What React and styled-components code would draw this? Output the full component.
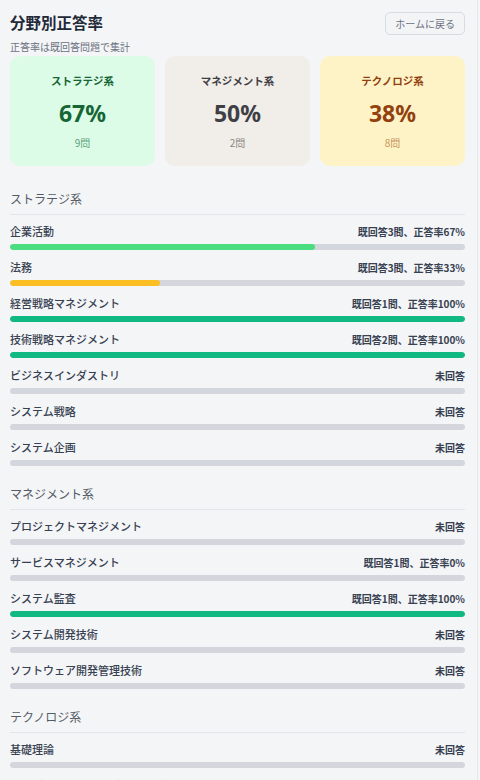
import React from "react";
import styled, { createGlobalStyle } from "styled-components";

const GlobalStyle = createGlobalStyle`
    html, body {
        margin: 0;
        padding: 0;
        background: #f4f5f7;
    }
    body {
        font-family: "Noto Sans CJK JP", "Noto Sans", sans-serif;
        color: #1f2937;
        overflow: hidden;
    }
`

const Page = styled.div`
    width: 478px;
    height: 780px;
    box-sizing: border-box;
    padding: 10px 12px 0 10px;
    border-right: 1px solid #e4e6ea;
    overflow: hidden;
`

const Header = styled.div`
    display: flex;
    justify-content: space-between;
    align-items: center;
`

const Title = styled.h1`
    margin: 0;
    font-size: 15.5px;
    font-weight: 700;
    color: #1f2937;
    line-height: 25px;
`

const HomeButton = styled.button`
    font-family: inherit;
    font-size: 10px;
    color: #6b7280;
    background: #f3f4f6;
    border: 1px solid #d8dbe0;
    border-radius: 5px;
    padding: 0 9px;
    height: 23px;
    margin-top: 1px;
`

const Sub = styled.div`
    font-size: 10px;
    color: #6b7280;
    margin-top: 5px;
    line-height: 14px;
`

const Cards = styled.div`
    display: grid;
    grid-template-columns: repeat(3, 1fr);
    gap: 10px;
    margin-top: 2px;
`

const Card = styled.div`
    background: ${p => p.$bg};
    border-radius: 10px;
    height: 110px;
    display: flex;
    flex-direction: column;
    align-items: center;
    padding-top: 17px;
    box-sizing: border-box;
`

const CardTitle = styled.div`
    font-size: 10.5px;
    font-weight: 700;
    color: ${p => p.$color};
    line-height: 16px;
`

const CardPct = styled.div`
    font-family: "Noto Sans", sans-serif;
    font-size: 23px;
    font-weight: 700;
    color: ${p => p.$color};
    line-height: 28px;
    margin-top: 10px;
`

const CardCount = styled.div`
    font-size: 10px;
    color: ${p => p.$color};
    line-height: 14px;
    margin-top: 9px;
`

const Section = styled.section`
    margin-top: 24px;
    & + & {
        margin-top: 19px;
    }
`

const SectionTitle = styled.div`
    font-size: 12px;
    color: #555b66;
    line-height: 18px;
    padding-bottom: 6px;
    border-bottom: 1px solid #e3e5e9;
    margin-bottom: 9px;
`

const Item = styled.div`
    margin-bottom: 10px;
`

const ItemHead = styled.div`
    display: flex;
    justify-content: space-between;
    align-items: center;
    line-height: 15px;
`

const Label = styled.span`
    font-size: 11px;
    font-weight: 500;
    color: #374151;
`

const Stat = styled.span`
    font-size: 10px;
    font-weight: 700;
    color: #374151;
`

const Track = styled.div`
    height: 6px;
    border-radius: 3px;
    background: #d3d6dc;
    margin-top: 5px;
    overflow: hidden;
`

const Fill = styled.div`
    height: 100%;
    border-radius: 3px;
    background: ${p => p.$color};
`

const summary = [
    { name: "ストラテジ系", pct: "67%", count: "9問", bg: "#dcfce7", fg: "#166534", sub: "#5fa37a" },
    { name: "マネジメント系", pct: "50%", count: "2問", bg: "#f1ede8", fg: "#3f3f46", sub: "#8a8680" },
    { name: "テクノロジ系", pct: "38%", count: "8問", bg: "#fef3c7", fg: "#92400e", sub: "#c7935a" },
];

const sections = [
    {
        name: "ストラテジ系",
        items: [
            { name: "企業活動", n: 3, rate: 67 },
            { name: "法務", n: 3, rate: 33 },
            { name: "経営戦略マネジメント", n: 1, rate: 100 },
            { name: "技術戦略マネジメント", n: 2, rate: 100 },
            { name: "ビジネスインダストリ" },
            { name: "システム戦略" },
            { name: "システム企画" },
        ],
    },
    {
        name: "マネジメント系",
        items: [
            { name: "プロジェクトマネジメント" },
            { name: "サービスマネジメント", n: 1, rate: 0 },
            { name: "システム監査", n: 1, rate: 100 },
            { name: "システム開発技術" },
            { name: "ソフトウェア開発管理技術" },
        ],
    },
    {
        name: "テクノロジ系",
        items: [
            { name: "基礎理論" },
            { name: "アルゴリズムとプログラミング" },
        ],
    },
];

const barColor = (rate) => {
    if (rate >= 80) return "#10b981";
    if (rate >= 50) return "#4ade80";
    return "#fbbf24";
};

const App = () => {
    return (
        <Page>
            <GlobalStyle />
            <Header>
                <Title>分野別正答率</Title>
                <HomeButton>ホームに戻る</HomeButton>
            </Header>
            <Sub>正答率は既回答問題で集計</Sub>
            <Cards>
                {summary.map(s => (
                    <Card key={s.name} $bg={s.bg}>
                        <CardTitle $color={s.fg}>{s.name}</CardTitle>
                        <CardPct $color={s.fg}>{s.pct}</CardPct>
                        <CardCount $color={s.sub}>{s.count}</CardCount>
                    </Card>
                ))}
            </Cards>
            {sections.map(sec => (
                <Section key={sec.name}>
                    <SectionTitle>{sec.name}</SectionTitle>
                    {sec.items.map(it => (
                        <Item key={it.name}>
                            <ItemHead>
                                <Label>{it.name}</Label>
                                <Stat>{it.n ? `既回答${it.n}問、正答率${it.rate}%` : "未回答"}</Stat>
                            </ItemHead>
                            <Track>
                                {it.n ? <Fill $color={barColor(it.rate)} style={{ width: `${it.rate}%` }} /> : null}
                            </Track>
                        </Item>
                    ))}
                </Section>
            ))}
        </Page>
    );
};

export default App;
